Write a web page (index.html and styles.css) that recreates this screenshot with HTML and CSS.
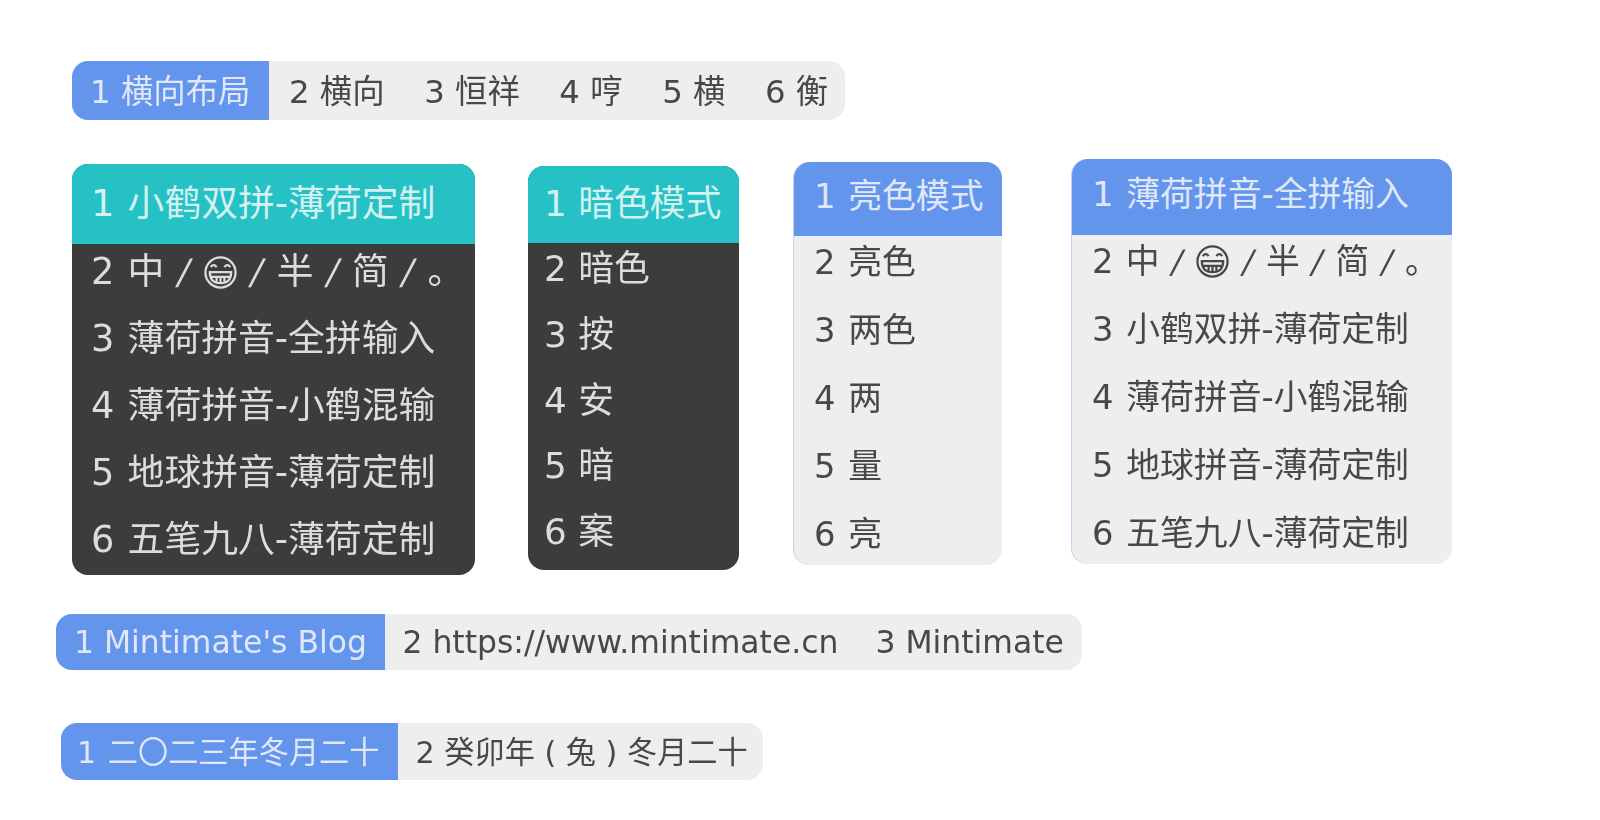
FILE: index.html
```html
<!DOCTYPE html>
<html lang="zh">
<head>
<meta charset="utf-8">
<title>Rime 主题预览</title>
<link rel="stylesheet" href="styles.css">
</head>
<body>
<main class="page">
  <div class="bar bar-layout light">
    <span class="item hl">1 横向布局</span>
    <span class="item">2 横向</span>
    <span class="item">3 恒祥</span>
    <span class="item">4 哼</span>
    <span class="item">5 横</span>
    <span class="item">6 衡</span>
  </div>

  <div class="lists">
    <div class="list list-b dark">
      <div class="row hl">1 小鹤双拼-薄荷定制</div>
      <div class="row"><span class="line">2 中 <span class="sl">/</span> <svg class="emoji" viewBox="0 0 36 36"><circle cx="18" cy="18" r="15.5"/><path d="M8 12.5q3-4 6 0M22 12.5q3-4 6 0"/><path d="M7 17.500h22q0 11.500-11 11.500T7 17.500zM8.500 22.500h19M14 22.500v6M18 22.500v6.500M22 22.500v6"/></svg> <span class="sl">/</span> 半 <span class="sl">/</span> 简 <span class="sl">/</span> 。</span></div>
      <div class="row">3 薄荷拼音-全拼输入</div>
      <div class="row">4 薄荷拼音-小鹤混输</div>
      <div class="row">5 地球拼音-薄荷定制</div>
      <div class="row">6 五笔九八-薄荷定制</div>
    </div>
    <div class="list list-c dark">
      <div class="row hl">1 暗色模式</div>
      <div class="row">2 暗色</div>
      <div class="row">3 按</div>
      <div class="row">4 安</div>
      <div class="row">5 暗</div>
      <div class="row">6 案</div>
    </div>
    <div class="list list-d light">
      <div class="row hl">1 亮色模式</div>
      <div class="row">2 亮色</div>
      <div class="row">3 两色</div>
      <div class="row">4 两</div>
      <div class="row">5 量</div>
      <div class="row">6 亮</div>
    </div>
    <div class="list list-e light">
      <div class="row hl">1 薄荷拼音-全拼输入</div>
      <div class="row"><span class="line">2 中 <span class="sl">/</span> <svg class="emoji" viewBox="0 0 36 36"><circle cx="18" cy="18" r="15.5"/><path d="M8 12.5q3-4 6 0M22 12.5q3-4 6 0"/><path d="M7 17.500h22q0 11.500-11 11.500T7 17.500zM8.500 22.500h19M14 22.500v6M18 22.500v6.500M22 22.500v6"/></svg> <span class="sl">/</span> 半 <span class="sl">/</span> 简 <span class="sl">/</span> 。</span></div>
      <div class="row">3 小鹤双拼-薄荷定制</div>
      <div class="row">4 薄荷拼音-小鹤混输</div>
      <div class="row">5 地球拼音-薄荷定制</div>
      <div class="row">6 五笔九八-薄荷定制</div>
    </div>
  </div>

  <div class="bar bar-blog light">
    <span class="item hl">1 Mintimate's Blog</span>
    <span class="item">2 https://www.mintimate.cn</span>
    <span class="item">3 Mintimate</span>
  </div>

  <div class="bar bar-date light">
    <span class="item hl">1 二〇二三年冬月二十</span>
    <span class="item">2 癸卯年 ( 兔 ) 冬月二十</span>
  </div>
</main>
</body>
</html>
```
FILE: styles.css
```css
* { box-sizing: border-box; }
html, body { margin: 0; padding: 0; background: #fff; }
body {
  width: 1600px;
  height: 820px;
  overflow: hidden;
  font-family: "DejaVu Sans", "Noto Sans CJK SC", sans-serif;
  color: #444;
}
.page { display: flow-root; filter: blur(0.55px); }

.bar {
  display: flex;
  width: max-content;
  overflow: hidden;
}
.bar .item { display: flex; align-items: center; white-space: pre; padding-bottom: 4px; }
.light { background: #eeeeee; color: #484848; }
.dark { background: #3c3c3c; color: #dcdcdc; }
.light .hl { background: #6495ed; color: #dfe7f8; }
.dark .hl { background: #25c1c5; color: #d4f1f1; }

.bar-layout { margin: 61px 0 0 72px; height: 59px; border-radius: 16px; font-size: 32.4px; }
.bar-layout .item { padding-left: 19.5px; padding-right: 20px; }
.bar-layout .item.hl { padding-left: 18px; padding-right: 19px; }
.bar-layout .item:last-child { padding-right: 17px; }

.lists { display: flex; align-items: flex-start; margin: 39px 0 0 72px; }
.list { overflow: hidden; }
.list.light { box-shadow: -1px 0 0 #c6d2f4; }
.row { display: flex; align-items: center; white-space: pre; padding-bottom: 4px; }
.line { display: block; white-space: pre; }
.row.hl { position: relative; }

.list-b { width: 403px; height: 411px; margin-top: 5px; border-radius: 16px; font-size: 36.8px; word-spacing: 1.5px; }
.list-b .row { height: 67px; padding-left: 19px; }
.list-b .row.hl { height: 80px; margin-bottom: -8px; padding-bottom: 8px; }

.list-c { width: 211px; height: 404px; margin: 7px 0 0 53px; border-radius: 16px; font-size: 35.8px; }
.list-c .row { height: 65.7px; padding-left: 16px; padding-bottom: 7px; }
.list-c .row.hl { height: 77px; margin-bottom: -7px; padding-bottom: 9px; }

.list-d { width: 208px; height: 403px; margin: 3px 0 0 55px; border-radius: 16px; font-size: 33.8px; word-spacing: 2px; }
.list-d .row { height: 67.8px; padding-left: 20px; }
.list-d .row.hl { height: 74px; margin-bottom: -8px; padding-bottom: 12px; }

.list-e { width: 380px; height: 405px; margin: 0 0 0 70px; border-radius: 16px; font-size: 33.8px; word-spacing: 2px; }
.list-e .row { height: 67.8px; padding-left: 20px; }
.list-e .row.hl { height: 76px; margin-bottom: -8px; padding-bottom: 12px; }
.list-e .line { word-spacing: 1.5px; }

.sl { display: inline-block; width: 0.35em; text-align: center; font-size: 0.95em; transform: skewX(-12deg); }

.bar-blog { margin: 39px 0 0 56px; height: 56px; border-radius: 16px; font-size: 31.45px; }
.bar-blog .item { padding: 0 18px; }
.bar-blog .item:nth-child(2) { padding-left: 17px; padding-right: 19px; }
.bar-blog .item.hl { padding-left: 18px; padding-right: 18.5px; }
.bar-date { margin: 53px 0 0 61px; height: 57px; border-radius: 16px; font-size: 30.2px; }
.bar-date .item { padding-left: 18px; padding-right: 15px; }
.bar-date .item.hl { padding-left: 16px; padding-right: 18px; word-spacing: 2px; }

.emoji { width: 35px; height: 35px; vertical-align: -0.18em; fill: none; stroke: currentColor; stroke-width: 2.3; }
```
